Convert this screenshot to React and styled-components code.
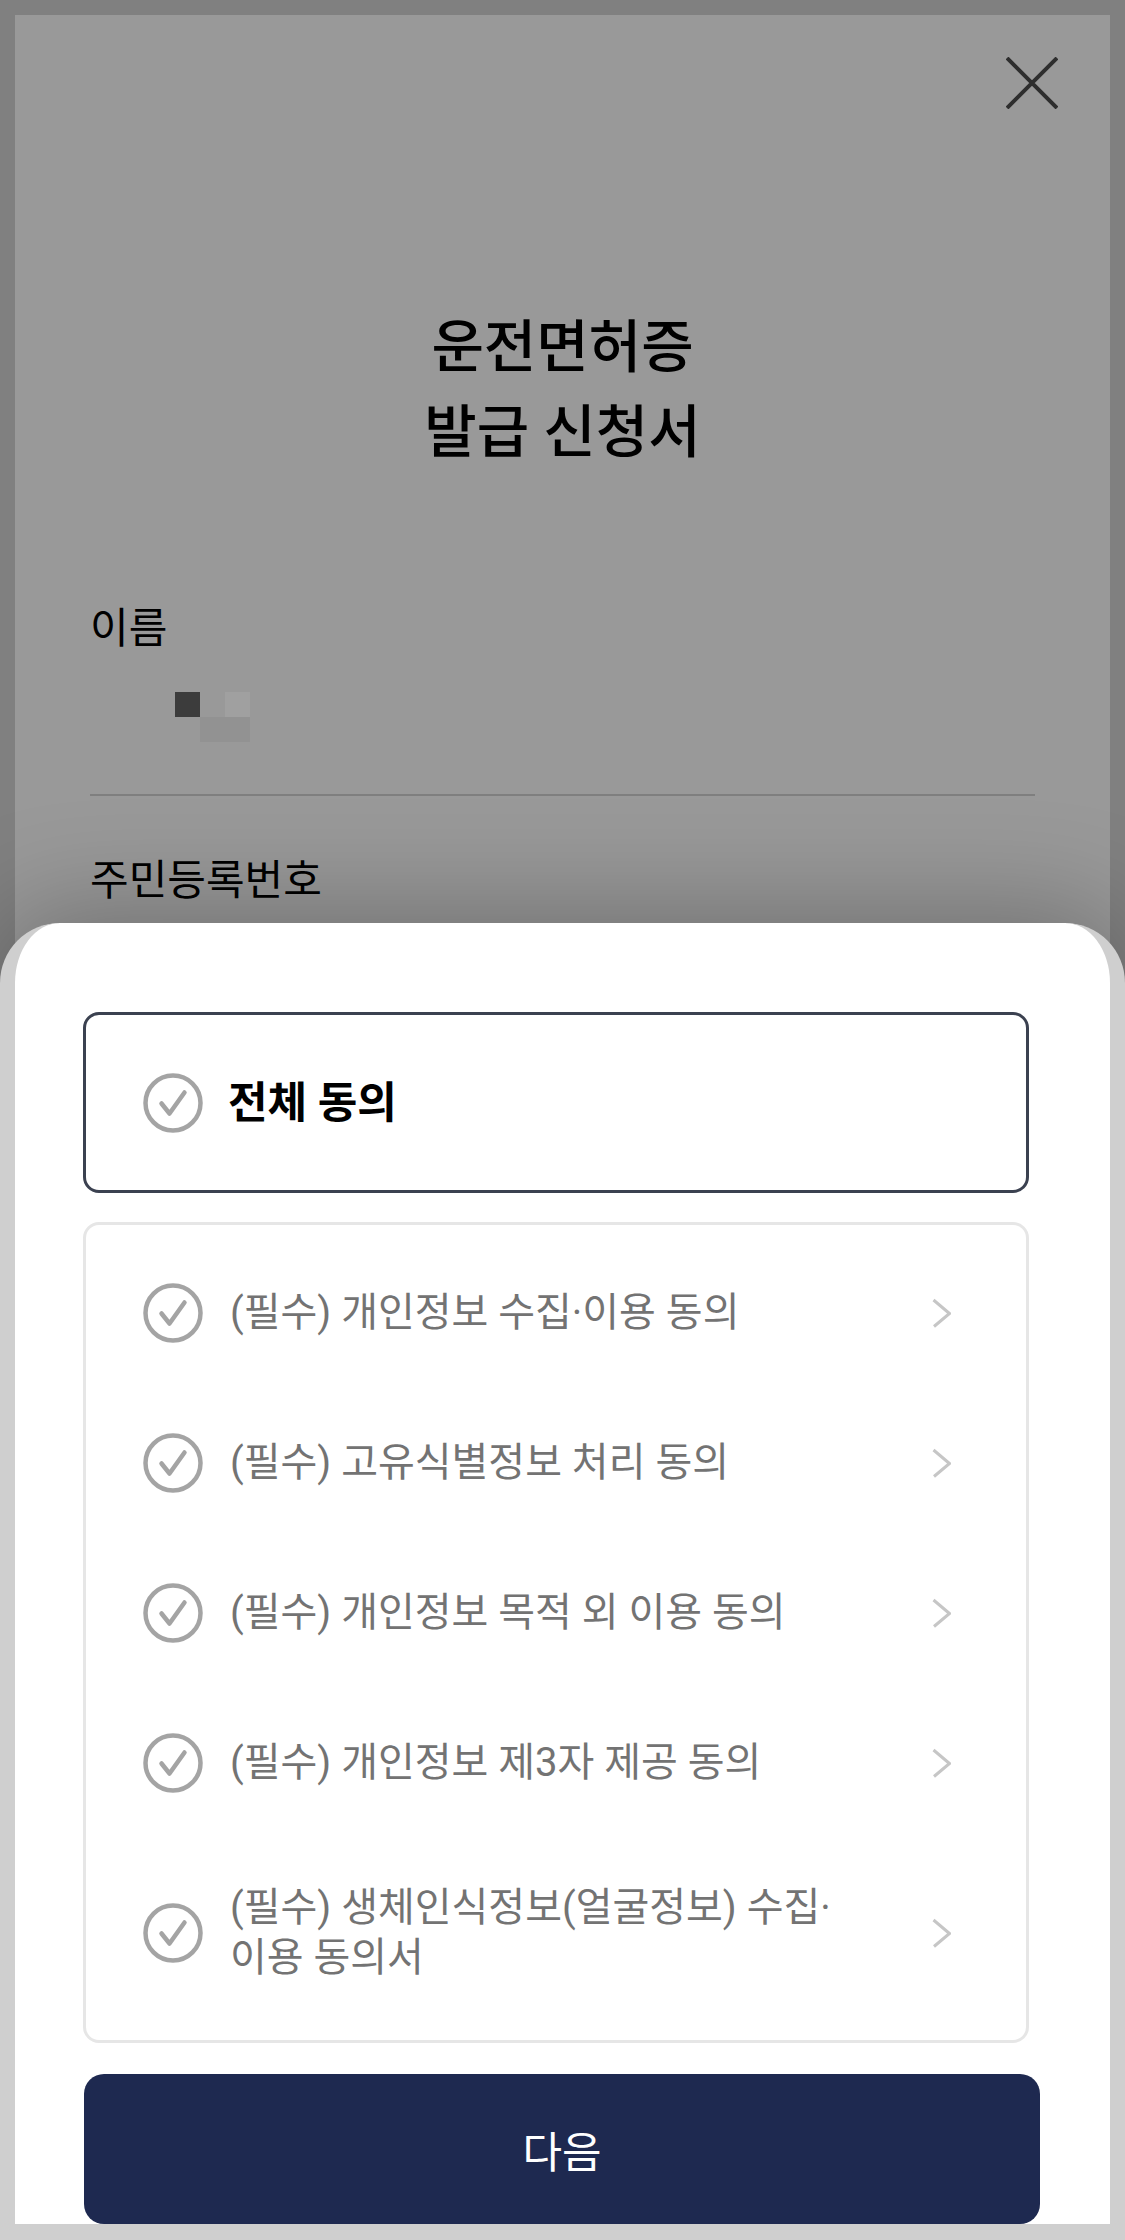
import React from 'react'
import styled, { createGlobalStyle } from 'styled-components'

const GlobalStyle = createGlobalStyle`
  html, body {
    margin: 0;
    padding: 0;
    background: #d0d0d0;
  }
  body {
    font-family: Roboto, "Noto Sans CJK KR", sans-serif;
  }
  * {
    box-sizing: border-box;
  }
`

const Screen = styled.div`
  position: relative;
  width: 1125px;
  height: 2240px;
  padding: 15px 15px 0;
  background: #808080;
  overflow: hidden;
`

// the form page, dimmed behind the sheet
const Page = styled.div`
  height: 100%;
  padding: 0 75px;
  background: #999999;
`

const TopBar = styled.div`
  display: flex;
  justify-content: flex-end;
  padding-top: 42px;
  margin-right: -23px;
`

const CloseBtn = styled.svg`
  display: block;
  width: 52px;
  height: 52px;
`

const Title = styled.h1`
  margin: 196px 0 0;
  text-align: center;
  font-size: 57px;
  line-height: 85px;
  font-weight: 500;
  color: #000;
`

const FieldLabel = styled.div`
  margin-top: ${({ gap }) => gap}px;
  font-size: 42px;
  line-height: 50px;
  color: #000;
`

const Mosaic = styled.svg`
  display: block;
  margin: 38px 0 0 85px;
`

const Divider = styled.div`
  margin-top: 52px;
  height: 2px;
  background: #7f7f7f;
`

// bottom sheet lies over the page
const Sheet = styled.div`
  position: absolute;
  top: 923px;
  left: 0;
  right: 0;
  bottom: 0;
  background: #fff;
  border: 15px solid #cfcfcf;
  border-top: 0;
  border-bottom-width: 16px;
  border-radius: 60px 60px 0 0;
  box-shadow: 0 -10px 110px rgba(0, 0, 0, 0.28);
  padding-top: 89px;
`

const AllAgree = styled.div`
  display: flex;
  align-items: center;
  gap: 25px;
  width: 946px;
  height: 181px;
  margin-left: 68px;
  padding-left: 57px;
  border: 3px solid #3b4150;
  border-radius: 16px;
`

const AllText = styled.span`
  font-size: 43px;
  line-height: 50px;
  font-weight: 700;
  color: #000;
`

const TermsList = styled.div`
  width: 946px;
  margin: 29px 0 0 68px;
  padding: 13px 0 12px;
  border: 3px solid #e6e6e6;
  border-radius: 16px;
`

const TermRow = styled.div`
  display: flex;
  align-items: center;
  min-height: 150px;
  padding: 45px 75px 45px 57px;
`

const TermText = styled.span`
  flex: 1;
  margin-left: 27px;
  padding-right: 40px;
  font-size: 40px;
  line-height: 50px;
  color: #737373;
  white-space: nowrap;
`

const Check = styled.svg`
  display: block;
  flex-shrink: 0;
  width: 60px;
  height: 60px;
`

const Chevron = styled.svg`
  display: block;
  flex-shrink: 0;
  width: 20px;
  height: 30px;
`

const NextButton = styled.button`
  display: flex;
  align-items: center;
  justify-content: center;
  width: 956px;
  height: 150px;
  margin: 31px 0 0 69px;
  border: 0;
  border-radius: 20px;
  background: #1e2950;
  color: #fff;
  font-family: inherit;
  font-size: 43px;
  cursor: pointer;
`

const CheckIcon = () => (
  <Check viewBox="0 0 60 60">
    <circle cx="30" cy="30" r="27.5" fill="none" stroke="#a4a4a4" strokeWidth="4.5" />
    <path
      d="M18.5 30.5 L26.5 40.5 L41.5 19.5"
      fill="none"
      stroke="#a4a4a4"
      strokeWidth="4.5"
      strokeLinecap="round"
      strokeLinejoin="round"
    />
  </Check>
)

const ChevronIcon = () => (
  <Chevron viewBox="0 0 20 30">
    <path d="M2.5 2 L18.5 15.5 L3 28.5" fill="none" stroke="#c6c6c6" strokeWidth="3" />
  </Chevron>
)

const terms = [
  ['(필수) 개인정보 수집·이용 동의'],
  ['(필수) 고유식별정보 처리 동의'],
  ['(필수) 개인정보 목적 외 이용 동의'],
  ['(필수) 개인정보 제3자 제공 동의'],
  ['(필수) 생체인식정보(얼굴정보) 수집·', '이용 동의서'],
]

export default function App() {
  return (
    <Screen>
      <GlobalStyle />
      <Page>
        <TopBar>
          <CloseBtn viewBox="0 0 52 52">
            <path d="M1 1 L51 51 M51 1 L1 51" stroke="#2e2e2e" strokeWidth="4" />
          </CloseBtn>
        </TopBar>
        <Title>
          운전면허증
          <br />
          발급 신청서
        </Title>
        <FieldLabel gap={129}>이름</FieldLabel>
        <Mosaic width="75" height="50" viewBox="0 0 75 50">
          <rect x="0" y="0" width="25" height="25" fill="#3c3c3c" />
          <rect x="50" y="0" width="25" height="25" fill="#a0a0a0" />
          <rect x="25" y="25" width="50" height="25" fill="#929292" />
        </Mosaic>
        <Divider />
        <FieldLabel gap={60}>주민등록번호</FieldLabel>
      </Page>

      <Sheet>
        <AllAgree>
          <CheckIcon />
          <AllText>전체 동의</AllText>
        </AllAgree>
        <TermsList>
          {terms.map((lines, i) => (
            <TermRow key={i}>
              <CheckIcon />
              <TermText>
                {lines.map((line, j) => (
                  <React.Fragment key={j}>
                    {j > 0 && <br />}
                    {line}
                  </React.Fragment>
                ))}
              </TermText>
              <ChevronIcon />
            </TermRow>
          ))}
        </TermsList>
        <NextButton>다음</NextButton>
      </Sheet>
    </Screen>
  )
}
